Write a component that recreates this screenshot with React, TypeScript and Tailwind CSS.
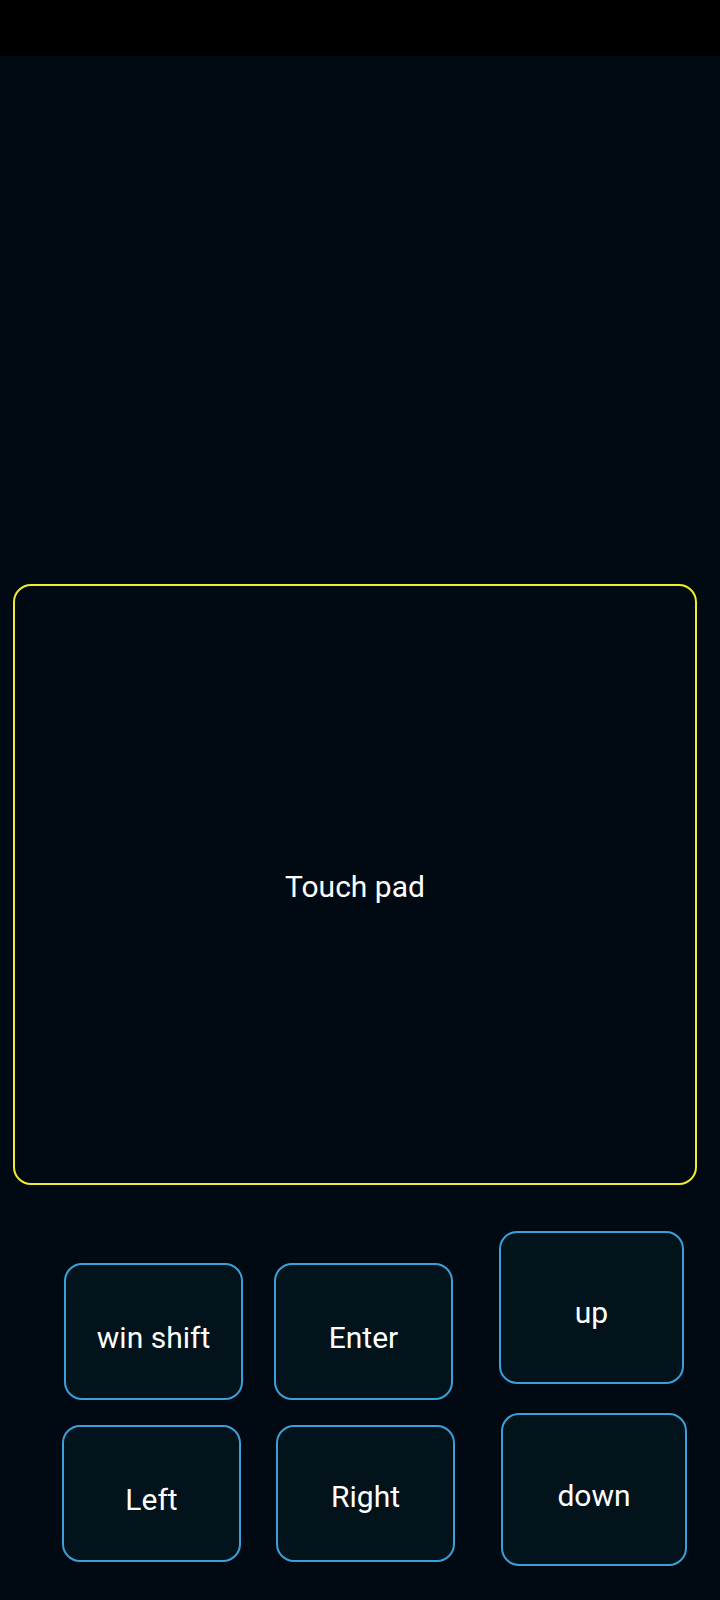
import React from 'react';

type KeyProps = {
  label: string;
  className: string;
};

function Key({ label, className }: KeyProps) {
  return (
    <button
      type="button"
      className={`flex items-center justify-center rounded-[18px] border-2 border-[#3b9fd9] bg-[#02131c] text-[30px] text-white ${className}`}
    >
      {label}
    </button>
  );
}

export default function App() {
  return (
    <div
      className="flex h-[1600px] w-[720px] flex-col overflow-hidden bg-[#010a12]"
      style={{ fontFamily: 'Roboto, "Noto Sans", sans-serif' }}
    >
      <div className="h-[56px] shrink-0 bg-black" />

      <div className="ml-[13px] mt-[528px] flex h-[601px] w-[684px] shrink-0 items-center justify-center rounded-[18px] border-2 border-[#f0ee28] pt-[3px]">
        <span className="text-[30px] text-white">Touch pad</span>
      </div>

      <div className="flex">
        <div className="ml-[62px] flex w-[181px] flex-col">
          <Key label="win shift" className="ml-[2px] mt-[78px] h-[137px] w-[179px] pt-[12px]" />
          <Key label="Left" className="mt-[25px] h-[137px] w-[179px] pt-[12px]" />
        </div>
        <div className="ml-[31px] flex w-[181px] flex-col">
          <Key label="Enter" className="mt-[78px] h-[137px] w-[179px] pt-[12px]" />
          <Key label="Right" className="ml-[2px] mt-[25px] h-[137px] w-[179px] pt-[6px]" />
        </div>
        <div className="ml-[44px] flex w-[188px] flex-col">
          <Key label="up" className="mt-[46px] h-[153px] w-[185px] pt-[10px]" />
          <Key label="down" className="ml-[2px] mt-[29px] h-[153px] w-[186px] pt-[12px]" />
        </div>
      </div>
    </div>
  );
}
